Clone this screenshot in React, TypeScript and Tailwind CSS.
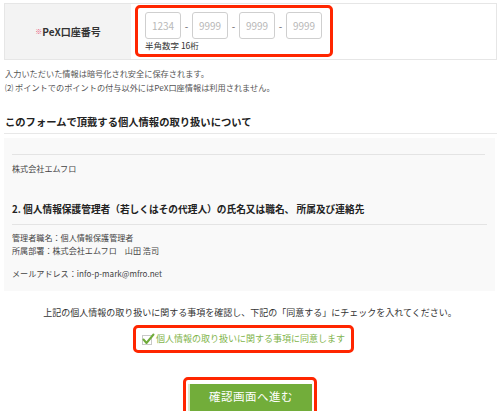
import React from "react";

const font = {
  fontFamily: '"Noto Sans CJK JP", "Noto Sans", "Liberation Sans", sans-serif',
};

function DigitBox({ placeholder }: { placeholder: string }) {
  return (
    <input
      readOnly
      placeholder={placeholder}
      className="w-[36px] h-[27px] border border-[#cfcfcf] rounded-[3px] bg-white text-center text-[10px] text-[#333] placeholder:text-[#b8b8b8] outline-none"
    />
  );
}

function CheckMark() {
  return (
    <svg width="14" height="14" viewBox="0 0 14 14" className="shrink-0">
      <rect x="1.5" y="3.5" width="9" height="9" fill="#fff" stroke="#c8c8c8" />
      <path d="M2.5 7.5 L5.5 11 L12.5 2.5" fill="none" stroke="#6fab3a" strokeWidth="2" strokeLinecap="round" strokeLinejoin="round" />
    </svg>
  );
}

export default function App() {
  return (
    <div className="w-[500px] h-[411px] overflow-hidden bg-white text-[#333]" style={font}>
      <div className="pt-[3px] pl-[4px] pr-[3px]">
        {/* PeX number row */}
        <div className="flex h-[57px] border border-[#e6e6e6]">
          <div className="w-[126px] bg-[#f3f3f3] flex items-center justify-center text-[10px] font-bold text-[#333]">
            <span className="text-[7px] text-[#e8557a] font-normal">※</span>
            PeX口座番号
          </div>
          <div className="flex-1 pl-[4px] pt-[1px]">
            <div className="w-[198px] h-[52px] border-[3px] border-[#ff2600] rounded-[5px] px-[7px] pt-[4px]">
              <div className="flex items-center gap-[3px]">
                <DigitBox placeholder="1234" />
                <span className="text-[10px] text-[#666] w-[5px] text-center">-</span>
                <DigitBox placeholder="9999" />
                <span className="text-[10px] text-[#666] w-[5px] text-center">-</span>
                <DigitBox placeholder="9999" />
                <span className="text-[10px] text-[#666] w-[5px] text-center">-</span>
                <DigitBox placeholder="9999" />
              </div>
              <div className="text-[8.5px] leading-[11px] mt-[1px] text-[#333]">半角数字 16桁</div>
            </div>
          </div>
        </div>

        {/* notes */}
        <div className="mt-[6px] pl-[1px] text-[8.2px] leading-[14px] text-[#555]">
          <p>入力いただいた情報は暗号化され安全に保存されます。</p>
          <p>⑵ ポイントでのポイントの付与以外にはPeX口座情報は利用されません。</p>
        </div>

        {/* privacy heading */}
        <h2 className="mt-[21px] pl-[1px] pb-[4px] text-[10.3px] leading-[14px] font-bold text-[#222] border-b border-[#e8e8e8]">
          このフォームで頂戴する個人情報の取り扱いについて
        </h2>

        {/* privacy box */}
        <div className="mt-[4px] mr-[2px] h-[153px] bg-[#f9f9f9] px-[8px] pt-[16px]">
          <div className="border-t border-[#e4e4e4] mr-[2px]" />
          <p className="mt-[8px] text-[8.1px] leading-[12px] text-[#444]">株式会社エムフロ</p>
          <h3 className="mt-[27px] pb-[8px] text-[9.7px] leading-[14px] font-bold text-[#222] border-b border-[#e4e4e4]">
            2. 個人情報保護管理者（若しくはその代理人）の氏名又は職名、 所属及び連絡先
          </h3>
          <div className="mt-[6px] text-[8.1px] leading-[13px] text-[#444]">
            <p>管理者職名：個人情報保護管理者</p>
            <p>所属部署：株式会社エムフロ　山田 浩司</p>
            <p className="mt-[10px]">メールアドレス：info-p-mark@mfro.net</p>
          </div>
        </div>
      </div>

      {/* consent */}
      <p className="mt-[16px] text-center text-[9px] leading-[12px] text-[#333]">
        上記の個人情報の取り扱いに関する事項を確認し、下記の「同意する」にチェックを入れてください。
      </p>
      <div className="mt-[6px] flex justify-center">
        <label className="ml-[-13px] w-[221px] h-[28px] border-[3px] border-[#ff2600] rounded-[5px] flex items-center pl-[5px] gap-[1px] text-[9px] text-[#7fb44c]">
          <CheckMark />
          個人情報の取り扱いに関する事項に同意します
        </label>
      </div>

      {/* submit */}
      <div className="mt-[24px] flex justify-center">
        <div className="w-[134px] h-[44px] border-[3px] border-[#ff2600] rounded-[5px] p-[2px]">
          <button className="w-full h-full bg-[#72ad3a] border-l-2 border-[#d9ead0] text-white text-[11.5px] tracking-[0.5px] pb-[8px]">
            確認画面へ進む
          </button>
        </div>
      </div>
    </div>
  );
}
